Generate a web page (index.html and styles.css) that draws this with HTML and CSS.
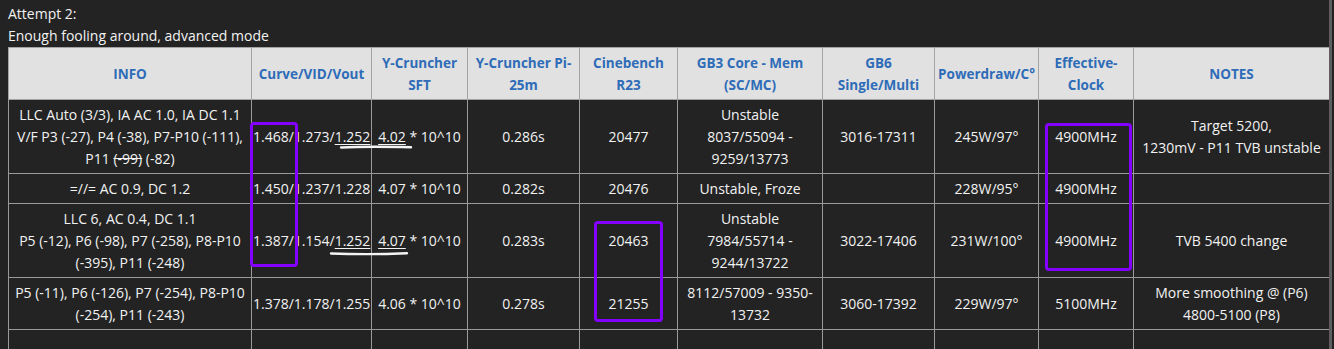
FILE: index.html
```html
<!DOCTYPE html>
<html>
<head>
<meta charset="utf-8">
<link rel="stylesheet" href="styles.css">
</head>
<body>
<div class="page">
  <div class="title">Attempt 2:</div>
  <div class="title">Enough fooling around, advanced mode</div>
  <table class="grid">
    <colgroup>
      <col class="c-info"><col class="c-curve"><col class="c-sft"><col class="c-pi"><col class="c-cine"><col class="c-gb3"><col class="c-gb6"><col class="c-power"><col class="c-eff"><col class="c-notes">
    </colgroup>
    <thead>
      <tr>
        <th>INFO</th>
        <th>Curve/VID/Vout</th>
        <th>Y-Cruncher<br>SFT</th>
        <th>Y-Cruncher Pi-<br>25m</th>
        <th>Cinebench<br>R23</th>
        <th>GB3 Core - Mem<br>(SC/MC)</th>
        <th>GB6<br>Single/Multi</th>
        <th>Powerdraw/C°</th>
        <th>Effective-<br>Clock</th>
        <th>NOTES</th>
      </tr>
    </thead>
    <tbody>
      <tr>
        <td>LLC Auto (3/3), IA AC 1.0, IA DC 1.1<br>V/F P3 (-27), P4 (-38), P7-P10 (-111),<br>P11 <s>(-99)</s> (-82)</td>
        <td>1.468/1.273/<u>1.252</u></td>
        <td><u>4.02</u> * 10^10</td>
        <td>0.286s</td>
        <td>20477</td>
        <td>Unstable<br>8037/55094 -<br>9259/13773</td>
        <td>3016-17311</td>
        <td>245W/97°</td>
        <td>4900MHz</td>
        <td>Target 5200,<br>1230mV - P11 TVB unstable</td>
      </tr>
      <tr>
        <td>=//= AC 0.9, DC 1.2</td>
        <td>1.450/1.237/1.228</td>
        <td>4.07 * 10^10</td>
        <td>0.282s</td>
        <td>20476</td>
        <td>Unstable, Froze</td>
        <td></td>
        <td>228W/95°</td>
        <td>4900MHz</td>
        <td></td>
      </tr>
      <tr>
        <td>LLC 6, AC 0.4, DC 1.1<br>P5 (-12), P6 (-98), P7 (-258), P8-P10<br>(-395), P11 (-248)</td>
        <td>1.387/1.154/<u>1.252</u></td>
        <td><u>4.07</u> * 10^10</td>
        <td>0.283s</td>
        <td>20463</td>
        <td>Unstable<br>7984/55714 -<br>9244/13722</td>
        <td>3022-17406</td>
        <td>231W/100°</td>
        <td>4900MHz</td>
        <td>TVB 5400 change</td>
      </tr>
      <tr>
        <td>P5 (-11), P6 (-126), P7 (-254), P8-P10<br>(-254), P11 (-243)</td>
        <td>1.378/1.178/1.255</td>
        <td>4.06 * 10^10</td>
        <td>0.278s</td>
        <td>21255</td>
        <td>8112/57009 - 9350-<br>13732</td>
        <td>3060-17392</td>
        <td>229W/97°</td>
        <td>5100MHz</td>
        <td>More smoothing @ (P6)<br>4800-5100 (P8)</td>
      </tr>
      <tr class="empty">
        <td></td><td></td><td></td><td></td><td></td><td></td><td></td><td></td><td></td><td></td>
      </tr>
    </tbody>
  </table>

  <div class="mark box-curve"></div>
  <div class="mark box-cine"></div>
  <div class="mark box-eff"></div>
  <svg class="scribble" width="1334" height="349" viewBox="0 0 1334 349">
    <path d="M341 147.5 C360 146.6 390 146.8 411 147.3" />
    <path d="M331 253.5 C355 254.4 385 254.2 407 253.3" />
  </svg>
  <div class="edge"></div>
</div>
</body>
</html>
```

FILE: styles.css
```css
html, body {
  margin: 0;
  padding: 0;
  background: #232323;
}

.page {
  position: relative;
  width: 1334px;
  height: 349px;
  overflow: hidden;
  padding: 3px 0 0 8px;
  box-sizing: border-box;
  font-family: "Open Sans", "Noto Sans", sans-serif;
  font-size: 14px;
  color: #f2f2f2;
}

.title {
  line-height: 22px;
  height: 22px;
  white-space: nowrap;
}

.grid {
  border-collapse: collapse;
  table-layout: fixed;
  width: 1321px;
}

.c-info { width: 243px; }
.c-curve { width: 120px; }
.c-sft { width: 96px; }
.c-pi { width: 112px; }
.c-cine { width: 98px; }
.c-gb3 { width: 145px; }
.c-gb6 { width: 112px; }
.c-power { width: 104px; }
.c-eff { width: 95px; }
.c-notes { width: 196px; }

.grid th,
.grid td {
  border: 1px solid #9a9a9a;
  padding: 4px 1px 3px;
  line-height: 22px;
  text-align: center;
  vertical-align: middle;
  white-space: nowrap;
  overflow: visible;
}

.grid th {
  background: #e1e1e1;
  color: #2e6cb8;
  font-weight: 700;
  font-size: 13.5px;
  border-color: #a3a3a3;
}

.grid td u {
  text-decoration: underline;
  text-underline-offset: 2px;
}

.grid td s {
  text-decoration: line-through;
}

.empty td {
  height: 30px;
}

.mark {
  position: absolute;
  border: 3px solid #8400ff;
  border-radius: 4px;
  box-sizing: border-box;
}

.box-curve { left: 250px; top: 122px; width: 48px; height: 145px; }
.box-cine { left: 594px; top: 221px; width: 69px; height: 101px; }
.box-eff { left: 1045px; top: 123px; width: 87px; height: 148px; }

.scribble {
  position: absolute;
  left: 0;
  top: 0;
  pointer-events: none;
}

.scribble path {
  fill: none;
  stroke: #f4f4f4;
  stroke-width: 2.4;
  stroke-linecap: round;
}

.edge {
  position: absolute;
  left: 1329px;
  top: 0;
  width: 3px;
  height: 349px;
  background: #5e5e5e;
}
```
